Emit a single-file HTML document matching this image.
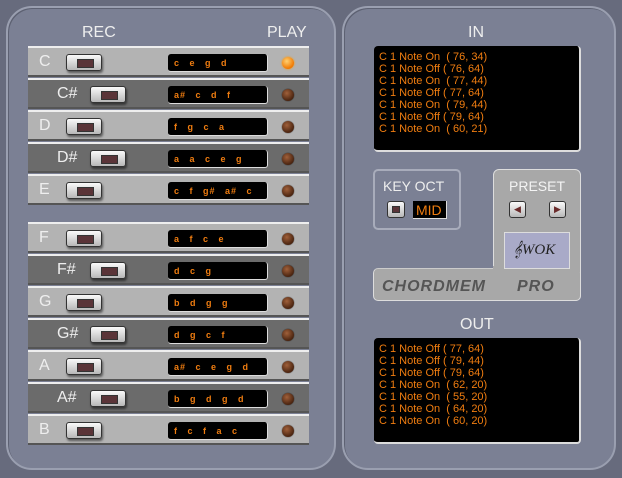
<!DOCTYPE html><html><head><style>
*{margin:0;padding:0;box-sizing:border-box}
body{width:622px;height:478px;background:#676b7d;position:relative;overflow:hidden;font-family:"Liberation Sans",sans-serif}
.a{position:absolute}
.panel{background:#7b8094;border:2px solid #9a9fb0;border-radius:26px;box-shadow:inset 1px 1px 0 #5d6172}
.row{position:absolute;left:28px;width:281px;height:31px;border-top:2px solid #eee;border-bottom:2px solid #555}
.n{background:#b3b3b3}.s{background:#6b6b6b}
.lbl{position:absolute;top:5px;color:#eee;font-size:16px}
.btn{position:absolute;top:6px;width:36px;height:17px;background:linear-gradient(#fafafa,#b8b8b8);border:1px solid #333;border-radius:3px;box-shadow:1px 2px 2px rgba(0,0,0,.5)}
.btn::after{content:"";position:absolute;left:10px;top:4px;width:15px;height:7px;background:#5a3438;border:1px solid #333}
.disp{position:absolute;left:140px;top:6px;width:100px;height:18px;background:#000;border-radius:3px;border-right:1px solid #ddd;border-bottom:1px solid #ddd;color:#f07d10;font-size:9px;font-weight:bold;padding:4px 0 0 6px;word-spacing:6px;letter-spacing:1px}
.led{position:absolute;left:254px;top:9px;width:12px;height:12px;border-radius:50%;background:radial-gradient(circle at 40% 35%,#a0603a,#4a2410 70%);box-shadow:0 0 1px #000}
.on{background:radial-gradient(circle at 40% 35%,#ffd070,#f07800 70%);box-shadow:0 0 2px #f90}
.h{position:absolute;color:#eee;font-size:16px}
.mon{position:absolute;background:#000;border-radius:4px;border-right:2px solid #ddd;border-bottom:2px solid #ddd;color:#f07d10;font-size:11px;line-height:12px;padding:5px 0 0 5px;white-space:pre}
</style></head><body>
<div class="a panel" style="left:6px;top:6px;width:330px;height:464px"></div>
<div class="a panel" style="left:342px;top:6px;width:274px;height:464px"></div>
<div class="h" style="left:82px;top:24px">REC</div>
<div class="h" style="left:267px;top:24px">PLAY</div>

<div class="row n" style="top:46px"><span class="lbl" style="left:11px">C</span><div class="btn" style="left:38px"></div><div class="disp">c e g d</div><div class="led on"></div></div>
<div class="row s" style="top:78px"><span class="lbl" style="left:29px">C#</span><div class="btn" style="left:62px"></div><div class="disp">a# c d f</div><div class="led"></div></div>
<div class="row n" style="top:110px"><span class="lbl" style="left:11px">D</span><div class="btn" style="left:38px"></div><div class="disp">f g c a</div><div class="led"></div></div>
<div class="row s" style="top:142px"><span class="lbl" style="left:29px">D#</span><div class="btn" style="left:62px"></div><div class="disp">a a c e g</div><div class="led"></div></div>
<div class="row n" style="top:174px"><span class="lbl" style="left:11px">E</span><div class="btn" style="left:38px"></div><div class="disp">c f g# a# c</div><div class="led"></div></div>

<div class="row n" style="top:222px"><span class="lbl" style="left:11px">F</span><div class="btn" style="left:38px"></div><div class="disp">a f c e</div><div class="led"></div></div>
<div class="row s" style="top:254px"><span class="lbl" style="left:29px">F#</span><div class="btn" style="left:62px"></div><div class="disp">d c g</div><div class="led"></div></div>
<div class="row n" style="top:286px"><span class="lbl" style="left:11px">G</span><div class="btn" style="left:38px"></div><div class="disp">b d g g</div><div class="led"></div></div>
<div class="row s" style="top:318px"><span class="lbl" style="left:29px">G#</span><div class="btn" style="left:62px"></div><div class="disp">d g c f</div><div class="led"></div></div>
<div class="row n" style="top:350px"><span class="lbl" style="left:11px">A</span><div class="btn" style="left:38px"></div><div class="disp">a# c e g d</div><div class="led"></div></div>
<div class="row s" style="top:382px"><span class="lbl" style="left:29px">A#</span><div class="btn" style="left:62px"></div><div class="disp">b g d g d</div><div class="led"></div></div>
<div class="row n" style="top:414px"><span class="lbl" style="left:11px">B</span><div class="btn" style="left:38px"></div><div class="disp">f c f a c</div><div class="led"></div></div>

<div class="h" style="left:468px;top:24px">IN</div>
<div class="mon" style="left:374px;top:46px;width:207px;height:106px">C 1 Note On  ( 76, 34)
C 1 Note Off ( 76, 64)
C 1 Note On  ( 77, 44)
C 1 Note Off ( 77, 64)
C 1 Note On  ( 79, 44)
C 1 Note Off ( 79, 64)
C 1 Note On  ( 60, 21)</div>

<div class="a" style="left:373px;top:169px;width:88px;height:61px;border:2px solid #a8acbb;border-radius:5px"></div>
<div class="h" style="left:383px;top:178px;font-size:14px">KEY OCT</div>
<div class="a" style="left:387px;top:201px;width:18px;height:17px;background:linear-gradient(#fafafa,#b8b8b8);border:1px solid #333;border-radius:3px"><div class="a" style="left:4px;top:4px;width:8px;height:7px;background:#5a3438;border:1px solid #333"></div></div>
<div class="a" style="left:413px;top:201px;width:34px;height:18px;background:#000;border-right:1px solid #ddd;border-bottom:1px solid #ddd;color:#f07d10;font-size:14px;padding:1px 0 0 3px">MID</div>

<div class="a" style="left:493px;top:169px;width:88px;height:132px;background:#a8a8a8;border:1px solid #ddd;border-radius:6px"></div>
<div class="a" style="left:373px;top:268px;width:208px;height:33px;background:#a8a8a8;border:1px solid #ddd;border-top-color:#ccc;border-radius:5px"></div>
<div class="a" style="left:493px;top:266px;width:87px;height:6px;background:#a8a8a8"></div>
<div class="h" style="left:509px;top:178px;color:#f4f4f4;font-size:14px">PRESET</div>
<div class="a" style="left:509px;top:201px;width:17px;height:17px;background:linear-gradient(#fafafa,#b8b8b8);border:1px solid #333;border-radius:3px;color:#6a2a2a;font-size:9px;text-align:center;line-height:15px">◀</div>
<div class="a" style="left:549px;top:201px;width:17px;height:17px;background:linear-gradient(#fafafa,#b8b8b8);border:1px solid #333;border-radius:3px;color:#6a2a2a;font-size:9px;text-align:center;line-height:15px">▶</div>
<div class="a" style="left:504px;top:232px;width:66px;height:37px;background:#a9aac8;border:1px solid #ddd;font-family:'Liberation Serif',serif;font-style:italic;color:#222;font-size:15px;padding:8px 0 0 8px">𝄞WOK</div>
<div class="a" style="left:382px;top:278px;color:#555;font-size:16px;font-weight:bold;font-style:italic;letter-spacing:1px">CHORDMEM</div>
<div class="a" style="left:517px;top:278px;color:#555;font-size:16px;font-weight:bold;font-style:italic;letter-spacing:1px">PRO</div>

<div class="h" style="left:460px;top:316px">OUT</div>
<div class="mon" style="left:374px;top:338px;width:207px;height:106px">C 1 Note Off ( 77, 64)
C 1 Note Off ( 79, 44)
C 1 Note Off ( 79, 64)
C 1 Note On  ( 62, 20)
C 1 Note On  ( 55, 20)
C 1 Note On  ( 64, 20)
C 1 Note On  ( 60, 20)</div>
</body></html>
